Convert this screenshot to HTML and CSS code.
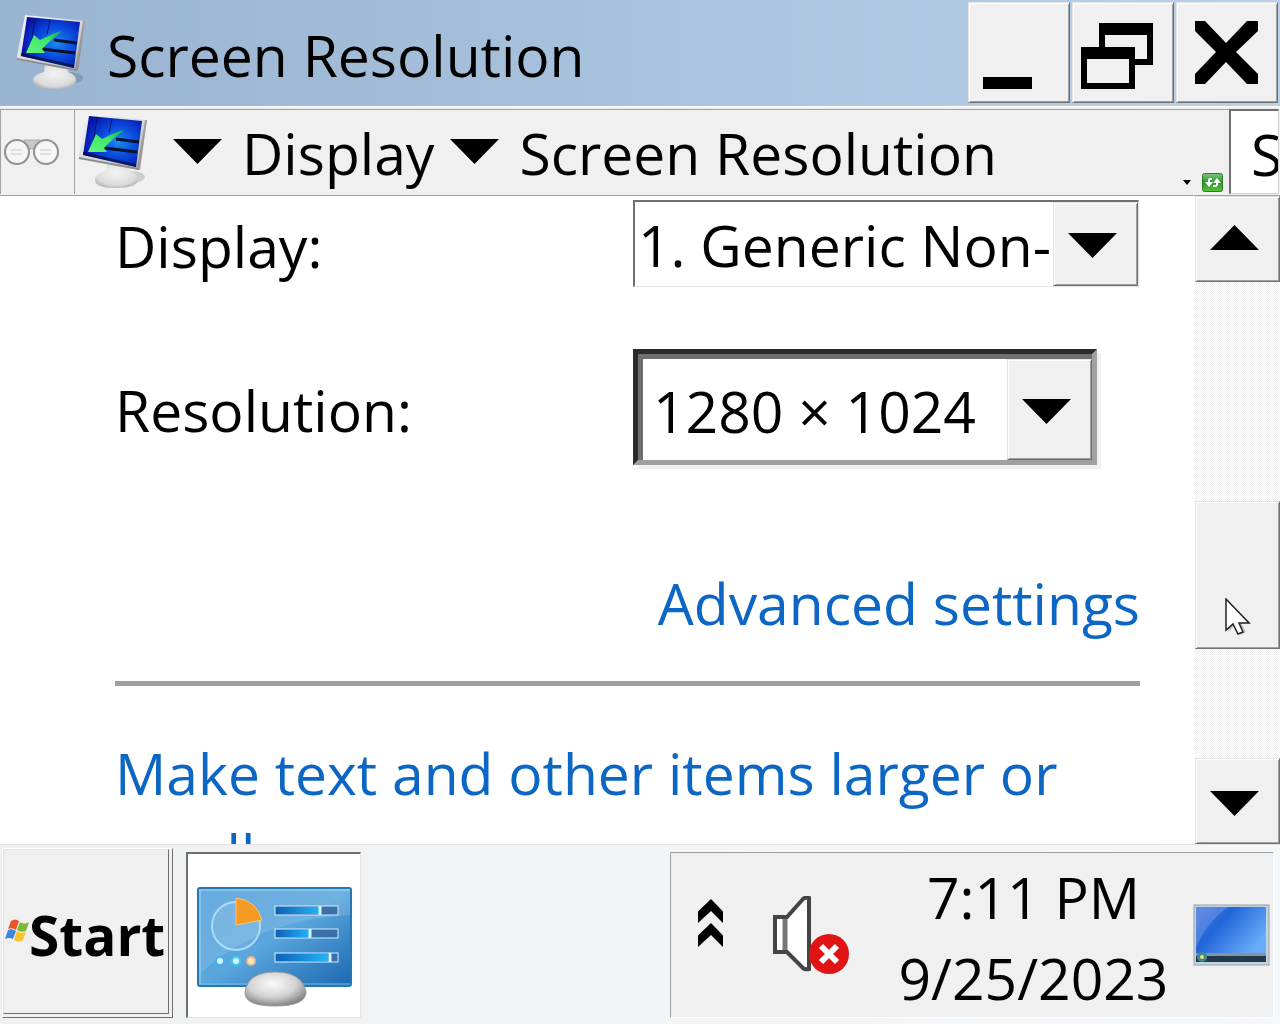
FILE: index.html
```html
<!DOCTYPE html>
<html lang="en">
<head>
<meta charset="utf-8">
<title>Screen Resolution</title>
<link rel="stylesheet" href="styles.css">
</head>
<body>
<svg class="defs" aria-hidden="true">
  <defs>
    <radialGradient id="screen" cx=".6" cy=".5" r=".6"><stop offset="0" stop-color="#1a8cf0"/><stop offset=".5" stop-color="#0a4ade"/><stop offset="1" stop-color="#0714a8"/></radialGradient>
    <linearGradient id="frame" x1="0" y1="0" x2="1" y2="1"><stop offset="0" stop-color="#f4f4f4"/><stop offset=".6" stop-color="#d4d4d4"/><stop offset="1" stop-color="#a4a4a4"/></linearGradient>
    <radialGradient id="base" cx=".45" cy=".35" r=".65"><stop offset="0" stop-color="#fafafa"/><stop offset=".6" stop-color="#d2d2d2"/><stop offset="1" stop-color="#858585"/></radialGradient>
    <radialGradient id="foot" cx=".5" cy=".4" r=".7"><stop offset="0" stop-color="#f4f4f4"/><stop offset=".7" stop-color="#dadada"/><stop offset="1" stop-color="#a0a0a0"/></radialGradient>
    <linearGradient id="arrow" x1="1" y1="0" x2="0" y2="1"><stop offset="0" stop-color="#1aa850"/><stop offset=".4" stop-color="#3ee468"/><stop offset="1" stop-color="#62fa78"/></linearGradient>
    <linearGradient id="panel" x1="0" y1="0" x2="1" y2="1"><stop offset="0" stop-color="#4f9fd8"/><stop offset=".5" stop-color="#5aa6dd"/><stop offset="1" stop-color="#1b68b0"/></linearGradient>
    <linearGradient id="meter"><stop offset="0" stop-color="#0e62b4"/><stop offset="1" stop-color="#22b4fa"/></linearGradient>
    <linearGradient id="desk" x1="0" y1="0" x2="1" y2=".6"><stop offset="0" stop-color="#4a78dc"/><stop offset=".4" stop-color="#2265d8"/><stop offset="1" stop-color="#68acfa"/></linearGradient>
    <linearGradient id="go" x1="0" y1="0" x2="0" y2="1"><stop offset="0" stop-color="#7cc47c"/><stop offset=".5" stop-color="#2c982c"/><stop offset="1" stop-color="#58c238"/></linearGradient>
    <symbol id="monitor" viewBox="14 12 76 80">
      <ellipse cx="68" cy="78" rx="14" ry="6" fill="#000" opacity=".14"/>
      <path d="M44 64h22l1 8q8 3 8 8 0 9-22 9t-21-9q0-5 11-8z" fill="url(#foot)"/>
      <path d="M24 15l60 6-8 50-60-11v-4z" fill="url(#frame)"/>
      <path d="M82 21l2 0-7 50-3 0z" fill="#888" opacity=".7"/>
      <path d="M16 58l59 11 1 2-60-11z" fill="#8c8c8c"/>
      <path d="M26 17l53 5-6 46-53-12z" fill="url(#screen)"/>
      <path d="M34 18l-4 28M49 20l-3 14" stroke="#0a1278" stroke-width="1"/>
      <path d="M53 40l23 3M41 49l33 4" stroke="#061030" stroke-width="3"/>
      <path d="M20 53l53 12v3L20 56z" fill="#06103c" opacity=".7"/>
      <path d="M60 31Q48 35 39 40l-6-5-8 18 19 0-3-4q8-9 19-17z" fill="url(#arrow)"/>
    </symbol>
    <symbol id="flag" viewBox="0 0 24 24">
      <path d="M6 3q4-3 8 0l-3 9q-4-3-8-1z" fill="#e8562a"/>
      <path d="M15 4q4 3 9 0l-3 9q-5 2-9-1z" fill="#7ab83a"/>
      <path d="M3 12q4-2 8 1l-3 8q-4-2-8 0z" fill="#3b88d8"/>
      <path d="M12 13q4 3 9 1l-3 8q-4 3-9 0z" fill="#f6c22e"/>
    </symbol>
    <symbol id="down" viewBox="0 0 49 25"><path d="M0 0h49L24.500 25z"/></symbol>
    <symbol id="up" viewBox="0 0 49 25"><path d="M0 25h49L24.500 0z"/></symbol>
  </defs>
</svg>

<header class="titlebar">
  <svg class="monitor" aria-hidden="true"><use href="#monitor"/></svg>
  <h1 class="title">Screen Resolution</h1>
  <div class="window-buttons">
    <button class="raised" aria-label="Minimize"><svg width="100" height="98"><path d="M14 74h49v12H14z"/></svg></button>
    <button class="raised" aria-label="Restore"><svg width="100" height="98"><path fill-rule="evenodd" d="M26 20h54v42H62v-6h12V32H32v12h-6zM8 44h54v42H8zM14 56v24h42V56z"/></svg></button>
    <button class="raised" aria-label="Close"><svg width="100" height="98"><path d="M18 18h10l21 22 21-22h11v10L59 49l22 22v10H70L49 59 28 81H18V71l21-22-21-21z"/></svg></button>
  </div>
</header>

<nav class="addressbar">
  <button class="glasses" aria-label="Back and forward">
    <svg width="56" height="30" fill="#f6f6f6" stroke="#909090" stroke-width="2"><path d="M20 3h16l-3 9h-9z" fill="#c8c8c8" stroke="#aaa" stroke-width="1"/><circle cx="13" cy="15" r="12"/><circle cx="42" cy="15" r="12"/><path d="M7 13h11M7 17h11M36 13h11M36 17h11" stroke="#e0e0e0"/></svg>
  </button>
  <div class="crumbs">
    <svg class="monitor" aria-hidden="true"><use href="#monitor"/></svg>
    <svg class="tri" aria-hidden="true"><use href="#down"/></svg>
    <a class="crumb" href="#display">Display</a>
    <svg class="tri" aria-hidden="true"><use href="#down"/></svg>
    <a class="crumb" href="#resolution">Screen Resolution</a>
    <span class="refresh">
      <button aria-label="Previous locations"><svg width="8" height="5"><path d="M0 0h8L4 5z"/></svg></button>
      <button aria-label="Refresh"><svg width="21" height="19"><rect x=".5" y=".5" width="20" height="18" rx="2" fill="url(#go)" stroke="#2a7a2a"/><path d="M10 5H8Q6 5 6 8v1H3l4 5 4-5H8V7h2zM11 14h2q3 0 3-3v-1h3l-4-5-4 5h3v2h-3z" fill="#fff"/></svg></button>
    </span>
  </div>
  <input class="search" type="text" placeholder="Search Control Panel" aria-label="Search Control Panel">
</nav>

<div class="viewport">
  <main class="content">
    <div class="field">
      <label for="display">Display:</label>
      <div class="combo">
        <select id="display"><option>1. Generic Non-PnP Monitor</option></select>
        <span class="drop raised" aria-hidden="true"><svg class="tri"><use href="#down"/></svg></span>
      </div>
    </div>
    <div class="field field-large">
      <label for="resolution">Resolution:</label>
      <div class="combo combo-large">
        <select id="resolution"><option>1280 × 1024</option></select>
        <span class="drop raised" aria-hidden="true"><svg class="tri"><use href="#down"/></svg></span>
      </div>
    </div>
    <a class="link advanced" href="#advanced">Advanced settings</a>
    <hr class="rule">
    <a class="link" href="#text-size">Make text and other items larger or smaller</a>
  </main>
  <div class="scrollbar">
    <button class="raised scroll-step" aria-label="Scroll up"><svg class="tri"><use href="#up"/></svg></button>
    <div class="track">
      <div class="thumb raised">
        <svg class="pointer" width="26" height="38" viewBox="0 0 26 38" aria-hidden="true"><path d="M3 3v31l7-7 5 10 6-3-5-9h10z" fill="#000" opacity=".2"/><path d="M1 1v31l7-6 5 10 5-2-4-9h10z" fill="#fff" stroke="#222" stroke-width="1.500"/></svg>
      </div>
    </div>
    <button class="raised scroll-step" aria-label="Scroll down"><svg class="tri"><use href="#down"/></svg></button>
  </div>
</div>

<footer class="taskbar">
  <button class="start"><span class="start-face"><svg width="24" height="24" aria-hidden="true"><use href="#flag"/></svg>Start</span></button>
  <button class="task" aria-label="Control Panel">
    <svg width="160" height="124" viewBox="0 0 160 124">
      <rect x="2" y="2" width="153" height="98" rx="2" fill="url(#panel)" stroke="#2678b4" stroke-width="2"/>
      <path d="M3 3h151v26Q105 32 70 46 38 58 3 88z" fill="#fff" opacity=".13"/>
      <path d="M3 4h151M4 4v94" stroke="#a4d8f4"/><path d="M3 98h151" stroke="#70c4ee"/>
      <circle cx="40" cy="40" r="24" fill="#fff" fill-opacity=".1" stroke="#a9dcf8" stroke-width="2"/>
      <path d="M40 39V12q20 2 26 22z" fill="#f59a22" stroke="#ffc477"/>
      <g fill="#3a6fa8" stroke="#cdeeff"><rect x="79" y="20" width="63" height="9"/><rect x="79" y="43" width="63" height="9"/><rect x="79" y="67" width="63" height="9"/></g>
      <g fill="url(#meter)"><path d="M80 21h44v7H80z"/><path d="M80 44h34v7H80z"/><path d="M80 68h52v7H80z"/></g>
      <path d="M124 20v9M114 43v9M134 67v9" stroke="#d4f4ff" stroke-width="3"/>
      <g stroke-width="2"><circle cx="24" cy="75" r="4" fill="#d4f6ff" stroke="#40b4ee"/><circle cx="40" cy="75" r="4" fill="#d4f6ff" stroke="#40c8ee"/><circle cx="55" cy="75" r="4" fill="#ffe9c0" stroke="#e8b890"/></g>
      <path d="M49 106q3-20 30-20t31 20q0 14-31 14t-30-14z" fill="url(#base)" stroke="#999"/>
    </svg>
  </button>
  <div class="tray">
    <button class="chevrons" aria-label="Show hidden icons"><svg width="26" height="49"><path d="M0 12.500L13 0l12 12.500V24L13 12 0 24zM0 36.500L13 24l12 12.500V48L13 36 0 48z"/></svg></button>
    <button aria-label="Volume muted"><svg width="78" height="78"><path d="M3 21h12L31 3q2-2 6-1v71q-4 1-6-1L15 56H3z" fill="#fff" stroke="#444" stroke-width="4"/><path d="M13 23v31" stroke="#777" stroke-width="5"/><circle cx="57" cy="58" r="20" fill="#e01414"/><path d="M49 50l16 16M65 50L49 66" stroke="#fff" stroke-width="6"/></svg></button>
    <time class="clock" datetime="2023-09-25T19:11">7:11 PM<br>9/25/2023</time>
    <button aria-label="Show desktop"><svg width="77" height="62"><rect x="1" y="1" width="75" height="60" fill="#c4d4de" stroke="#92a2ae"/><rect x="3" y="3" width="70" height="48" fill="url(#desk)"/><path d="M3 3h32Q12 20 3 44z" fill="#fff" opacity=".16"/><path d="M3 50h70v8H3z" fill="#24384c"/><path d="M3 49h70v3H3z" fill="#8294a4"/><circle cx="9" cy="53" r="5" fill="#3c8a94"/><circle cx="9" cy="53" r="2" fill="#f4e060"/></svg></button>
  </div>
</footer>
</body>
</html>
```

FILE: styles.css
```css
:root {
  --text: 57px;
  --line: 81px;
  --face: #f0f0f0;
  --shade: #6f6f6f;
  --link: #0c66c4;
}

* { box-sizing: border-box; }

body {
  margin: 0;
  height: 100vh;
  display: flex;
  flex-direction: column;
  overflow: hidden;
  background: #fff;
  color: #000;
  font: var(--text)/var(--line) "Open Sans", "Noto Sans", sans-serif;
}

button, input, select { font: inherit; color: inherit; border-radius: 0; }
button { padding: 0; border: 0; background: none; }
svg { display: block; flex: none; }
a { text-decoration: none; }

.defs { position: absolute; width: 0; height: 0; }
.monitor { width: 76px; height: 80px; }
.tri { width: 49px; height: 25px; }

.raised {
  background: var(--face);
  border: 1px solid;
  border-color: #e3e3e3 var(--shade) var(--shade) #e3e3e3;
  box-shadow: inset 1px 1px #fff, inset -1px -1px #a0a0a0;
}

.titlebar {
  flex: none;
  display: flex;
  align-items: center;
  height: 106px;
  padding: 0 2px 2px 15px;
  background: linear-gradient(90deg, #99b4d1, #b9d1ea);
}

.title {
  flex: 1;
  margin: 0;
  padding: 6px 0 0 16px;
  font-size: var(--text);
  font-weight: 400;
  white-space: nowrap;
}

.window-buttons { display: flex; gap: 2px; }
.window-buttons button { width: 102px; height: 101px; }

.addressbar {
  flex: none;
  display: flex;
  height: 90px;
  padding: 2px 1px 1px 0;
  background: var(--face);
  border-top: 1px solid #fff;
  border-bottom: 1px solid #a0a0a0;
}

.glasses { width: 74px; padding-left: 3px; border: 1px solid #a0a0a0; border-width: 1px 0 0 1px; }

.crumbs {
  flex: 1;
  min-width: 0;
  display: flex;
  align-items: center;
  padding: 0 0 2px 2px;
  border: 1px solid #a0a0a0;
  border-width: 1px 0 0 1px;
}

.crumbs .tri { margin: 0 20px; }
.crumbs .tri ~ .tri { margin: 0 20px 0 16px; }
.crumb { padding-top: 4px; color: inherit; white-space: nowrap; }

.refresh {
  align-self: flex-end;
  display: flex;
  align-items: center;
  gap: 11px;
  margin: 0 6px 0 auto;
}

.search {
  width: 50px;
  padding: 4px 0 0 20px;
  border: 1px solid #d0d0d0;
  border-top: 2px solid var(--shade);
  border-left: 2px solid var(--shade);
  background: #fff;
}
.search::placeholder { color: #000; opacity: 1; }

.viewport { flex: 1; min-height: 0; display: flex; }

.content {
  flex: 1;
  min-width: 0;
  overflow: hidden;
  padding: 4px 55px 0 115px;
}

.field {
  display: grid;
  grid-template-columns: 518px 1fr;
  align-items: center;
  padding-right: 1px;
}
.field label { padding-top: 6px; }
.field-large { margin-top: 62px; }

.combo {
  display: grid;
  grid-template-columns: 1fr 85px;
  grid-template-rows: minmax(0, 1fr);
  height: 87px;
  border: 1px solid #e3e3e3;
  border-top: 2px solid var(--shade);
  border-left: 2px solid var(--shade);
}
.combo select {
  min-width: 0;
  width: 100%;
  height: 100%;
  padding: 3px 0 0 3px;
  border: 0;
  background: #fff;
  appearance: none;
  overflow: hidden;
}
.drop { display: grid; place-items: center; padding: 3px 6px 0 0; }

.combo-large {
  width: 464px;
  height: 116px;
  border: 5px solid;
  border-color: #2b2b2b #a0a0a0 #a0a0a0 #2b2b2b;
  box-shadow: 4px 4px #f0f0f0, inset 5px 5px #6f6f6f;
  padding: 5px 0 0 5px;
}
.combo-large select { padding-left: 10px; }

.link { display: block; color: var(--link); }
.advanced { margin-top: 98px; text-align: right; }
.rule { height: 5px; margin: 37px 0 47px; border: 0; background: #a0a0a0; }

.scrollbar { flex: none; width: 85px; display: flex; flex-direction: column; }
.scroll-step { display: grid; place-items: center; height: 86px; padding: 0 6px 3px 0; }
.track + .scroll-step { padding: 5px 6px 0 0; }
.track {
  flex: 1;
  display: flex;
  flex-direction: column;
  background: repeating-conic-gradient(#f0f0f0 0 25%, #fff 0 50%) 0 0 / 2px 2px;
}
.track::before { content: ""; flex: 2; }
.track::after { content: ""; flex: 1; }
.thumb { position: relative; height: 148px; }
.pointer { position: absolute; left: 29px; top: 96px; }

.taskbar {
  flex: none;
  display: flex;
  height: 180px;
  padding: 3px 6px 6px 2px;
  border-top: 1px solid #e3e3e3;
  background: linear-gradient(90deg, #f0f0f0, #f5f8fb);
}

.start {
  flex: none;
  width: 171px;
  padding: 0 3px 3px 0;
  border: 1px solid;
  border-color: #fff var(--shade) var(--shade) #fff;
  background: var(--face);
}
.start-face {
  display: flex;
  align-items: center;
  height: 100%;
  padding: 6px 0 0 1px;
  border: 1px solid;
  border-color: #e3e3e3 var(--shade) var(--shade) #e3e3e3;
  font-size: 55px;
  font-weight: 700;
}
.start-face svg { margin-top: -10px; }

.task {
  flex: none;
  width: 175px;
  margin: 4px 0 0 13px;
  padding: 24px 0 0 8px;
  border: 1px solid #e3e3e3;
  border-top: 2px solid var(--shade);
  border-left: 2px solid var(--shade);
  background: #fff;
}

.tray {
  display: flex;
  align-items: center;
  width: 604px;
  margin: 4px 0 0 auto;
  padding-left: 27px;
  border: 1px solid #fff;
  border-top-color: #a0a0a0;
  border-left-color: #a0a0a0;
  background: var(--face);
}
.chevrons { margin: -24px 48px 0 0; }
.clock { flex: 1; padding: 5px 0 0 24px; text-align: center; white-space: nowrap; }
.tray button:last-child { margin-right: 3px; }
```
